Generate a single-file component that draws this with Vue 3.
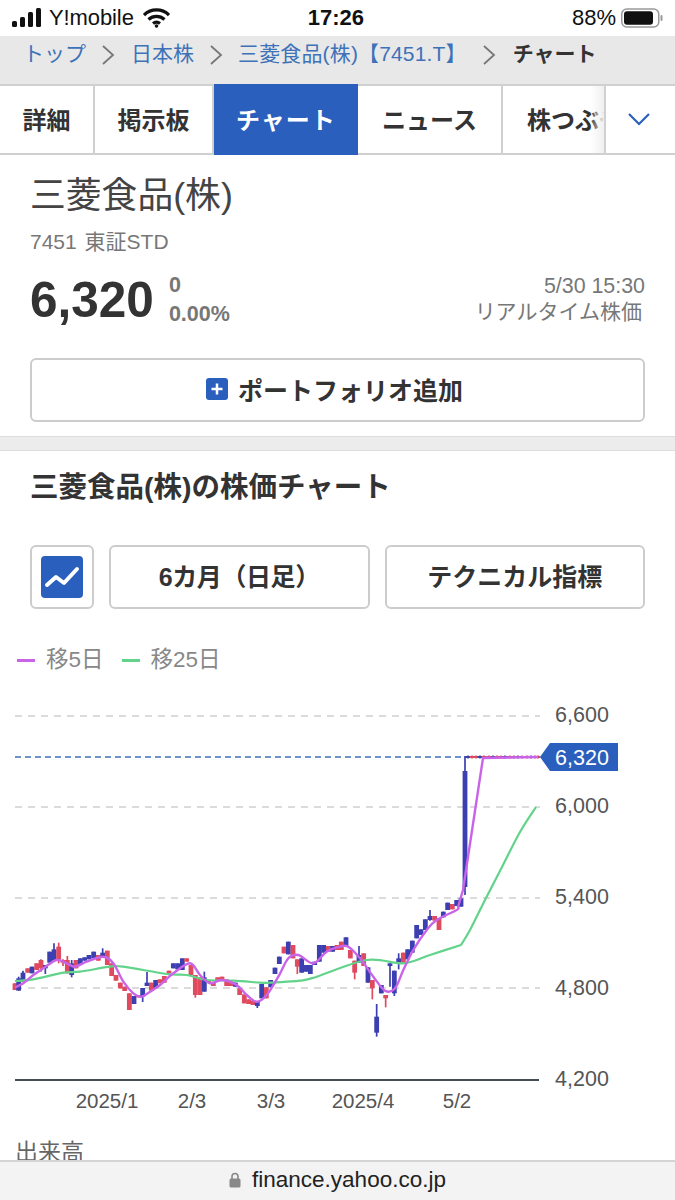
<script setup>
const tabs = [
  { label: '詳細', w: 95 },
  { label: '掲示板', w: 119 },
  { label: 'チャート', w: 144, active: true },
  { label: 'ニュース', w: 145 },
  { label: '株つぶやき', w: 101, clipped: true },
]

const toPageA = ([x, t, b, wt, wb, c]) => ({
  x: x / 3, top: 900 + t / 3, bottom: 900 + b / 3,
  wt: 900 + (wt ?? t) / 3, wb: 900 + (wb ?? b) / 3, c,
})
const toPageB = ([x, t, b, wt, wb, c]) => ({
  x: 270 + x / 3, top: 900 + t / 3, bottom: 900 + b / 3,
  wt: 900 + (wt ?? t) / 3, wb: 900 + (wb ?? b) / 3, c,
})
const R = 'r', B = 'b'
const partA = [
  [45,250,270,,,R],[56,235,272,230,,B],[69,218,245,212,,B],[83,205,218,,,R],[96,200,220,,,B],
  [110,190,210,,,R],[123,180,205,178,215,R],[136,195,205,195,222,B],[149,155,188,,,B],[162,148,182,130,,B],
  [176,140,178,128,190,R],[189,180,188,178,198,R],[202,180,220,168,,R],[215,190,225,180,232,B],[228,180,205,,,R],
  [241,175,192,,,B],[254,172,182,,,B],[267,165,178,,,B],[281,155,175,,,B],[295,165,182,,,R],
  [308,158,172,145,,B],[322,152,195,,,R],[335,190,228,,,R],[348,225,242,,,R],[361,248,265,,,R],
  [374,260,273,,,R],[388,280,330,,,R],[402,288,312,,,B],[415,285,292,,,R],[428,264,290,,306,B],
  [441,248,258,216,,B],[454,248,272,,,R],[467,240,265,,,B],[480,238,250,,,R],[493,228,248,,,R],
  [507,212,220,,225,R],[520,190,205,,,B],[533,190,208,,,B],[547,175,210,,,B],[560,175,185,,,R],
  [573,195,225,,,R],[586,225,285,,293,R],[600,232,285,,,R],[613,232,275,215,,B],[626,240,248,,,R],
  [640,248,258,,,R],[653,232,240,,,R],[666,230,240,,,R],[680,238,258,,,R],[693,245,258,,,R],
  [706,248,260,,,B],[719,265,285,,,R],[733,283,310,,,R],[746,298,312,,,R],[759,302,315,,,R],
  [772,305,318,,324,B],[785,252,295,,,B],[799,262,295,,,R],
]
const partB = [
  [2,240,262,,,B],[15,203,222,,,B],[28,170,192,,,B],[42,140,160,,,R],[55,125,163,,,B],
  [69,135,175,,,R],[82,178,200,,222,R],[95,175,218,,,B],[108,195,215,,,B],[121,195,222,,,B],
  [134,185,195,,,B],[148,135,185,,,B],[161,135,158,,,B],[175,138,155,,,R],[188,138,155,,,B],
  [201,135,150,,,R],[214,125,150,,,R],[228,112,138,,,B],[241,150,175,,,R],[254,182,218,,238,R],
  [267,165,188,138,,B],[281,160,198,,,R],[294,202,248,,,B],[307,240,265,,298,R],[320,350,398,312,410,B],
  [334,255,280,,,B],[347,285,295,,322,R],[360,190,198,,260,B],[373,212,280,,288,B],[386,175,190,160,208,B],
  [400,158,188,,,R],[413,148,178,,,B],[427,122,158,,,B],[440,75,115,,,B],[453,88,105,,,B],
  [466,58,90,,,B],[480,48,60,30,62,B],[494,48,62,,,R],[507,55,90,,,R],[520,35,52,,,B],
  [533,8,30,,,B],[547,12,28,,,R],[560,0,18,,,B],[573,-5,20,,,B],
]
const spike = { x: 465, top: 771, bottom: 887, wt: 756, wb: 895, c: B }
const flat = [468, 472, 476, 480, 484, 489, 493, 497, 501, 505, 510, 514, 518, 522, 527, 531, 535, 538]
  .map((x, i) => ({ x, top: 756, bottom: 758, wt: 755.5, wb: 758.5, c: i % 3 === 0 ? B : R }))
const candles = [...partA.map(toPageA), ...partB.map(toPageB), spike, ...flat]

const smooth = (pts) => {
  let d = `M${pts[0][0]} ${pts[0][1]}`
  for (let i = 0; i < pts.length - 1; i++) {
    const p0 = pts[i - 1] || pts[i], p1 = pts[i], p2 = pts[i + 1], p3 = pts[i + 2] || p2
    const c1 = [p1[0] + (p2[0] - p0[0]) / 6, p1[1] + (p2[1] - p0[1]) / 6]
    const c2 = [p2[0] - (p3[0] - p1[0]) / 6, p2[1] - (p3[1] - p1[1]) / 6]
    d += ` C${c1[0].toFixed(1)} ${c1[1].toFixed(1)} ${c2[0].toFixed(1)} ${c2[1].toFixed(1)} ${p2[0].toFixed(1)} ${p2[1].toFixed(1)}`
  }
  return d
}
const fromA = (a) => a.map(([x, y]) => [x / 3, 900 + y / 3])
const fromB = (a) => a.map(([x, y]) => [270 + x / 3, 900 + y / 3])

const purplePath = smooth([
  ...fromA([[45,262],[70,250],[100,225],[130,205],[170,180],[200,190],[225,200],[260,185],[310,170],[340,190],[370,245],[400,280],[425,290],[450,275],[480,255],[520,220],[570,190],[600,225],[630,250],[665,240],[710,255],[740,285],[770,305],[800,285]]),
  ...fromB([[25,230],[55,175],[85,165],[130,190],[170,155],[210,140],[235,140],[270,175],[310,230],[345,272],[375,265],[400,210],[430,150],[470,90],[500,60],[560,30]]),
  [458, 907],
]) + ' L463 890 L483 758 L538 757'

const greenPath = smooth([
  ...fromA([[45,243],[100,238],[190,218],[240,215],[330,200],[370,200],[500,222],[560,225],[620,240],[700,242],[780,248]]),
  ...fromB([[0,248],[90,242],[140,230],[290,180],[400,190],[480,165]]),
  [461, 945],
]) + ' ' + smooth([[461, 945], [470, 930], [485, 900], [502, 867], [520, 832], [536, 807]]).replace(/^M\S+ \S+/, '')

const grid = [716, 807, 898, 988]
const yLabels = [
  { t: '6,600', y: 714 }, { t: '6,000', y: 805 }, { t: '5,400', y: 896 }, { t: '4,800', y: 987 }, { t: '4,200', y: 1078 },
]
const xLabels = [
  { t: '2025/1', x: 107 }, { t: '2/3', x: 192 }, { t: '3/3', x: 271 }, { t: '2025/4', x: 363 }, { t: '5/2', x: 457 },
]
</script>

<template>
  <div class="page">
    <header class="status">
      <svg class="signal" width="30" height="20" viewBox="0 0 30 20">
        <rect x="0" y="13" width="5" height="6" rx="1.5" />
        <rect x="8" y="9" width="5" height="10" rx="1.5" />
        <rect x="16" y="4" width="5" height="15" rx="1.5" />
        <rect x="24" y="0" width="5" height="19" rx="1.5" />
      </svg>
      <span class="carrier">Y!mobile</span>
      <svg class="wifi" width="27" height="20" viewBox="0 0 27 20">
        <path d="M1 7 A18 18 0 0 1 26 7" />
        <path d="M5.5 11.5 A12 12 0 0 1 21.5 11.5" />
        <path d="M10 15.5 A5.5 5.5 0 0 1 17 15.5" />
        <circle cx="13.5" cy="18" r="1.8" class="dot" />
      </svg>
      <span class="time">17:26</span>
      <span class="battery-text">88%</span>
      <svg class="battery" width="42" height="20" viewBox="0 0 42 20">
        <rect x="0.75" y="1" width="37" height="18" rx="5" class="shell" />
        <rect x="3" y="3.2" width="29" height="13.6" rx="3" />
        <rect x="39.5" y="7" width="2" height="6" rx="1" class="cap" />
      </svg>
    </header>

    <nav class="crumbs">
      <a>トップ</a>
      <svg class="sep" width="14" height="22" viewBox="0 0 14 22"><path d="M2 2 L12 11 L2 20" /></svg>
      <a>日本株</a>
      <svg class="sep" width="14" height="22" viewBox="0 0 14 22"><path d="M2 2 L12 11 L2 20" /></svg>
      <a class="company">三菱食品(株)【7451.T】</a>
      <svg class="sep" width="14" height="22" viewBox="0 0 14 22"><path d="M2 2 L12 11 L2 20" /></svg>
      <b>チャート</b>
    </nav>

    <div class="tabs">
      <div class="tab-track">
        <div
          v-for="t in tabs"
          :key="t.label"
          class="tab"
          :class="{ active: t.active, clipped: t.clipped }"
          :style="{ flexBasis: t.w + 'px' }"
        >{{ t.label }}</div>
        <div class="fade"></div>
      </div>
      <div class="more">
        <svg width="24" height="14" viewBox="0 0 24 14"><path d="M2 2 L12 12 L22 2" /></svg>
      </div>
    </div>

    <main class="main">
      <section class="stock">
        <h1 class="name">三菱食品(株)</h1>
        <div class="code">7451 東証STD</div>
        <div class="quote">
          <div class="price">6,320</div>
          <div class="change">
            <div>0</div>
            <div>0.00%</div>
          </div>
          <div class="when">
            <div>5/30 15:30</div>
            <div class="rt">リアルタイム株価</div>
          </div>
        </div>
        <button class="portfolio">
          <span class="plus">
            <svg width="22" height="22" viewBox="0 0 22 22">
              <rect width="22" height="22" rx="3" class="plus-bg" />
              <path d="M11 5.5 V16.5 M5.5 11 H16.5" class="plus-mark" />
            </svg>
          </span>
          <span class="portfolio-label">ポートフォリオ追加</span>
        </button>
      </section>

      <div class="band"></div>

      <section class="chart-section">
        <h2 class="heading">三菱食品(株)の株価チャート</h2>
        <div class="toolbar">
          <button class="icon-btn">
            <svg width="42" height="42" viewBox="0 0 42 42">
              <rect width="42" height="42" rx="4" class="icon-bg" />
              <path d="M6 29 L15 21 L23 27 L36 13" class="icon-line" />
            </svg>
          </button>
          <button class="tool period">6カ月（日足）</button>
          <button class="tool">テクニカル指標</button>
        </div>
        <div class="legend">
          <span class="key"><i class="swatch purple"></i>移5日</span>
          <span class="key"><i class="swatch green"></i>移25日</span>
        </div>

        <svg class="chart" width="675" height="430" viewBox="0 690 675 430">
          <line
            v-for="y in grid" :key="y"
            x1="15" x2="540" :y1="y" :y2="y"
            class="grid"
          />
          <line x1="15" x2="540" y1="757" y2="757" class="last" />
          <line x1="15" x2="539" y1="1080" y2="1080" class="base" />

          <g v-for="(c, i) in candles" :key="i" :class="c.c === 'r' ? 'up' : 'down'">
            <line :x1="c.x" :x2="c.x" :y1="c.wt" :y2="c.wb" class="wick" />
            <rect :x="c.x - 2.4" :y="c.top" width="4.8" :height="c.bottom - c.top" class="body" />
          </g>

          <path :d="greenPath" class="ma green-line" />
          <path :d="purplePath" class="ma purple-line" />

          <path d="M540 757 L550 743 H618 V771 H550 Z" class="badge" />
          <text x="582" y="765" class="badge-text">6,320</text>

          <text v-for="l in yLabels" :key="l.t" x="582" :y="l.y + 8" class="axis">{{ l.t }}</text>
          <text v-for="l in xLabels" :key="l.t" :x="l.x" y="1108" class="axis small">{{ l.t }}</text>
        </svg>

        <div class="volume">出来高</div>
      </section>
    </main>

    <footer class="address">
      <svg width="12" height="16" viewBox="0 0 12 16">
        <path d="M3 7 V4.5 A3 3 0 0 1 9 4.5 V7" class="shackle" />
        <rect x="0.5" y="6.5" width="11" height="9" rx="1.5" class="lock" />
      </svg>
      <span>finance.yahoo.co.jp</span>
    </footer>
  </div>
</template>

<style>
html, body { margin: 0; padding: 0; background: #fff; }
</style>

<style scoped>
.page {
  width: 675px;
  height: 1200px;
  display: flex;
  flex-direction: column;
  overflow: hidden;
  background: #fff;
  color: #333;
  font-family: "Liberation Sans", "Noto Sans CJK JP", sans-serif;
}
.status {
  height: 36px;
  flex: none;
  display: flex;
  align-items: center;
  padding: 0 12px;
  box-sizing: border-box;
  color: #111;
  font-size: 22px;
  position: relative;
}
.signal { fill: #111; margin-right: 7px; }
.carrier { font-size: 22px; letter-spacing: -0.1px; }
.wifi { margin-left: 9px; fill: none; stroke: #111; stroke-width: 3.2; }
.wifi .dot { fill: #111; stroke: none; }
.time { margin-left: 138px; font-weight: 700; width: 60px; }
.battery-text { margin-left: auto; margin-right: 5px; }
.battery { fill: #111; }
.battery .shell { fill: none; stroke: #999; stroke-width: 1.5; }
.battery .cap { fill: #999; }

.crumbs {
  height: 48px;
  flex: none;
  box-sizing: border-box;
  background: #e8e8e8;
  display: flex;
  align-items: flex-start;
  padding: 6px 0 0 23px;
  font-size: 21px;
  line-height: 24px;
  color: #3e72b8;
  white-space: nowrap;
}
.crumbs b { color: #333; margin-left: 17px; font-size: 21px; }
.sep { fill: none; stroke: #777; stroke-width: 1.8; margin: 2px 0 0 15px; flex: none; }
.crumbs a { margin-left: 16px; }
.crumbs a:first-child { margin-left: 0; }
.crumbs .company { margin-left: 15px; letter-spacing: 0.15px; }

.tabs {
  height: 71px;
  flex: none;
  display: flex;
}
.tab-track {
  flex: 1;
  min-width: 0;
  display: flex;
  overflow: hidden;
  position: relative;
}
.tab {
  flex: none;
  box-sizing: border-box;
  display: flex;
  align-items: center;
  justify-content: center;
  white-space: nowrap;
  overflow: hidden;
  padding-bottom: 3px;
  font-size: 24px;
  font-weight: 700;
  color: #333;
  border-top: 2px solid #d0d0d0;
  border-bottom: 2px solid #d0d0d0;
  border-right: 2px solid #d0d0d0;
}
.tab.clipped { justify-content: flex-start; padding-left: 24px; border-right: none; }
.tab.active {
  background: #2a5fbd;
  color: #fff;
  border: none;
  letter-spacing: 1px;
}
.fade {
  position: absolute;
  top: 2px;
  bottom: 2px;
  right: 0;
  width: 14px;
  background: linear-gradient(90deg, rgba(255, 255, 255, 0), #f0f0f0);
}
.more {
  width: 71px;
  flex: none;
  display: flex;
  align-items: center;
  justify-content: center;
  border: 2px solid #d0d0d0;
  border-right: none;
  box-sizing: border-box;
}
.more svg { fill: none; stroke: #2a5fbd; stroke-width: 2.2; margin-left: -4px; margin-bottom: 2px; }

.main { flex: 1; min-height: 0; overflow: hidden; }

.stock { padding: 21px 30px 0; }
.name {
  margin: 0;
  font-size: 35.8px;
  line-height: 40px;
  font-weight: 400;
  color: #444;
}
.code {
  margin-top: 14px;
  font-size: 21px;
  line-height: 24px;
  word-spacing: 2px;
  color: #777;
}
.quote {
  display: flex;
  align-items: flex-start;
  margin-top: 18px;
  height: 58px;
}
.price {
  font-size: 49.5px;
  line-height: 56px;
  font-weight: 700;
  color: #333;
}
.change {
  margin-left: 15px;
  font-size: 21.5px;
  font-weight: 700;
  color: #777;
  line-height: 29px;
  margin-top: -1px;
}
.when {
  margin-left: auto;
  margin-top: 1px;
  text-align: right;
  font-size: 21.4px;
  line-height: 26px;
  color: #777;
}
.when .rt { font-size: 21px; margin-right: 3px; }
.portfolio {
  width: 615px;
  height: 64px;
  margin-top: 28px;
  display: flex;
  align-items: center;
  gap: 10px;
  background: #fff;
  border: 2px solid #ccc;
  border-radius: 6px;
  font-family: inherit;
  font-size: 25px;
  font-weight: 700;
  color: #333;
  padding: 0 0 3px 174px;
}
.plus { display: flex; }
.plus-bg { fill: #2a5fbd; }
.plus-mark { stroke: #fff; stroke-width: 2.5; fill: none; }

.band {
  height: 15px;
  margin-top: 14px;
  box-sizing: border-box;
  background: #ececec;
  border-top: 1px solid #ddd;
  border-bottom: 1px solid #ddd;
}

.heading {
  margin: 16px 30px 0;
  font-size: 28.5px;
  line-height: 40px;
  font-weight: 700;
  color: #333;
}
.toolbar {
  display: flex;
  gap: 15px;
  padding: 38px 30px 0;
  height: 64px;
}
.toolbar button {
  box-sizing: border-box;
  background: #fff;
  border: 2px solid #ccc;
  border-radius: 6px;
  font-family: inherit;
  padding: 0;
}
.icon-btn {
  width: 64px;
  flex: none;
  display: flex;
  align-items: center;
  justify-content: center;
}
.icon-bg { fill: #2a5fbd; }
.icon-line { fill: none; stroke: #fff; stroke-width: 4; stroke-linecap: round; stroke-linejoin: round; }
.toolbar .tool {
  flex: 1 1 0;
  min-width: 0;
  font-size: 25px;
  font-weight: 700;
  color: #333;
  padding-bottom: 4px;
}
.toolbar .period { letter-spacing: -0.4px; }
.legend {
  display: flex;
  gap: 18px;
  padding: 39px 0 0 17px;
  height: 24px;
  line-height: 24px;
  font-size: 22.5px;
  color: #888;
}
.key { display: flex; align-items: center; }
.swatch { width: 18px; height: 3px; margin-right: 11px; display: block; }
.swatch.purple { background: #c964e8; }
.swatch.green { background: #62d38a; }

.chart { display: block; margin-top: 18px; }
.grid { stroke: #d0d0d0; stroke-width: 1.5; stroke-dasharray: 7 6; }
.last { stroke: #3e72b8; stroke-width: 1.5; stroke-dasharray: 6 4; }
.base { stroke: #444c56; stroke-width: 2; }
.up .wick { stroke: #e04a5e; stroke-width: 1.7; }
.up .body { fill: #e04a5e; }
.down .wick { stroke: #3c3fb0; stroke-width: 1.7; }
.down .body { fill: #3c3fb0; }
.ma { fill: none; stroke-linejoin: round; }
.purple-line { stroke: #c964e8; stroke-width: 2.4; }
.green-line { stroke: #62d38a; stroke-width: 2.2; }
.badge { fill: #2a5fbd; }
.badge-text { fill: #fff; font-size: 21.5px; text-anchor: middle; }
.axis { fill: #555; font-size: 21.5px; text-anchor: middle; }
.axis.small { font-size: 20.5px; }

.volume {
  margin: 18px 0 0 15px;
  font-size: 23px;
  line-height: 28px;
  color: #666;
}

.address {
  height: 40px;
  flex: none;
  box-sizing: border-box;
  background: #f3f3f3;
  border-top: 2px solid #d4d4d4;
  display: flex;
  align-items: center;
  justify-content: center;
  gap: 11px;
  padding-bottom: 2px;
  font-size: 22.5px;
  color: #222;
}
.shackle { fill: none; stroke: #888; stroke-width: 1.6; }
.lock { fill: #888; }
</style>
